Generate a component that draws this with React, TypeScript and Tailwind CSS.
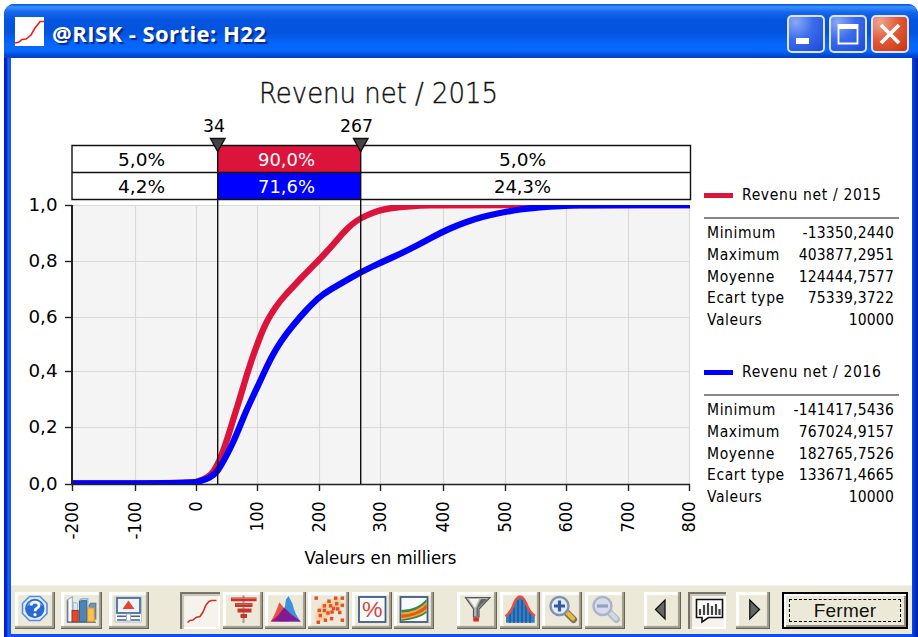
import type { ReactNode } from "react";
import clsx from "clsx";

const FONT = "font-['DejaVu_Sans_Condensed','DejaVu_Sans',sans-serif]";

const legends = [
  {
    name: "Revenu net / 2015",
    swatch: "bg-[#dc143c]",
    rows: [
      ["Minimum", "-13350,2440"],
      ["Maximum", "403877,2951"],
      ["Moyenne", "124444,7577"],
      ["Ecart type", "75339,3722"],
      ["Valeurs", "10000"],
    ],
  },
  {
    name: "Revenu net / 2016",
    swatch: "bg-[#0000ff]",
    rows: [
      ["Minimum", "-141417,5436"],
      ["Maximum", "767024,9157"],
      ["Moyenne", "182765,7526"],
      ["Ecart type", "133671,4665"],
      ["Valeurs", "10000"],
    ],
  },
];

const xTicks = [
  { x: 72, label: "-200", len: 38 },
  { x: 135, label: "-100", len: 38 },
  { x: 196, label: "0", len: 10 },
  { x: 257, label: "100", len: 30 },
  { x: 319, label: "200", len: 31 },
  { x: 380, label: "300", len: 31 },
  { x: 443, label: "400", len: 31 },
  { x: 505, label: "500", len: 31 },
  { x: 566, label: "600", len: 31 },
  { x: 628, label: "700", len: 31 },
  { x: 689, label: "800", len: 31 },
];

const yTicks = [
  { y: 205, label: "1,0" },
  { y: 261, label: "0,8" },
  { y: 317, label: "0,6" },
  { y: 371, label: "0,4" },
  { y: 427, label: "0,2" },
  { y: 484, label: "0,0" },
];

const curve2015: number[][] = [
  [72, 483.5], [190, 483.5], [203, 480], [211, 475], [217, 466], [222, 454], [228, 437], [233, 420], [240, 398],
  [247, 374], [255, 350], [264, 327], [271, 314], [280, 301], [290, 290], [305, 274], [318, 261], [332, 246],
  [342, 234], [352, 224], [361, 218], [372, 213], [384, 209], [400, 207], [420, 205.5], [440, 205], [690, 205],
];
const curve2016: number[][] = [
  [72, 483.5], [190, 483.5], [205, 480], [214, 475], [219, 469], [228, 453], [236, 436], [246, 411], [257, 388],
  [268, 364], [276, 349], [286, 334], [300, 317], [312, 304], [323, 294], [340, 284], [361, 272], [382, 262],
  [400, 254], [420, 244], [440, 233], [458, 225], [475, 219], [490, 215], [510, 211], [530, 208], [550, 206.5],
  [570, 205.5], [590, 205], [690, 205],
];

// Rounds the corners: each point becomes the control point between two midpoints
const smooth = (pts: number[][]) => {
  let d = `M${pts[0][0]} ${pts[0][1]}`;
  for (let i = 1; i < pts.length - 1; i++) {
    const [x, y] = pts[i];
    const [nx, ny] = pts[i + 1];
    d += `Q${x} ${y} ${(x + nx) / 2} ${(y + ny) / 2}`;
  }
  const last = pts[pts.length - 1];
  return `${d}L${last[0]} ${last[1]}`;
};

// The view box keeps window coordinates, so the drawing starts at 11,58
const Chart = () => (
  <svg viewBox="11 58 689 527" className={clsx("h-[527px] w-[689px] shrink-0", FONT)}>
    <defs>
      <clipPath id="plot">
        <rect x="72" y="205" width="618" height="279" />
      </clipPath>
    </defs>

    <text
      x="259"
      y="103"
      fontSize="29"
      textLength="239"
      lengthAdjust="spacingAndGlyphs"
      fill="#111"
      stroke="#111"
      strokeWidth="0.4"
      className="font-['DejaVu_Sans_Light','DejaVu_Sans',sans-serif] font-extralight"
    >
      Revenu net / 2015
    </text>

    {/* Plot area and grid */}
    <rect x="72" y="205" width="618" height="279" fill="#f4f4f4" />
    <g stroke="#dadada" strokeWidth="1.2">
      {xTicks.slice(1).map((t) => (
        <line key={t.x} x1={t.x + 0.5} x2={t.x + 0.5} y1="205" y2="484" />
      ))}
      {yTicks.slice(0, -1).map((t) => (
        <line key={t.y} x1="72" x2="690" y1={t.y + 0.5} y2={t.y + 0.5} />
      ))}
    </g>

    {/* Curves */}
    <g clipPath="url(#plot)" fill="none" strokeWidth="6.3" strokeLinejoin="round">
      <path d={smooth(curve2015)} stroke="#dc143c" />
      <path d={smooth(curve2016)} stroke="#0000ff" />
    </g>

    {/* Axes */}
    <g stroke="#222" strokeWidth="1.4">
      <line x1="72" x2="72" y1="205" y2="485" strokeWidth="2" />
      <line x1="71" x2="690" y1="484.5" y2="484.5" />
      {xTicks.map((t) => (
        <line key={t.x} x1={t.x + 0.5} x2={t.x + 0.5} y1="484" y2="491" />
      ))}
      {yTicks.map((t) => (
        <line key={t.y} x1="65" x2="72" y1={t.y + 0.5} y2={t.y + 0.5} />
      ))}
    </g>
    {yTicks.map((t) => (
      <text key={t.label} x="28.5" y={t.y + 5.5} fontSize="18.5" textLength="29" lengthAdjust="spacingAndGlyphs">
        {t.label}
      </text>
    ))}
    {xTicks.map((t) => (
      <text
        key={t.label}
        transform={`translate(${t.x + 6} 501.5) rotate(-90)`}
        fontSize="18.5"
        textAnchor="end"
        textLength={t.len}
        lengthAdjust="spacingAndGlyphs"
      >
        {t.label}
      </text>
    ))}
    <text x="304.5" y="564" fontSize="17" textLength="152" lengthAdjust="spacingAndGlyphs">
      Valeurs en milliers
    </text>

    {/* Delimiter bar */}
    <rect x="72" y="145.5" width="618" height="54" fill="#fff" />
    <rect x="217.5" y="145.5" width="143" height="27" fill="#dc143c" />
    <rect x="217.5" y="172.5" width="143" height="27" fill="#0000ff" />
    <g stroke="#111" strokeWidth="1.4">
      <path d="M72 145.5H690.5V199.5H72ZM72 172.5H690.5" fill="none" />
      <line x1="217.7" x2="217.7" y1="146" y2="484" />
      <line x1="360.7" x2="360.7" y1="146" y2="484" />
      <path d="M210.5 138.5H225L217.7 151.5Z" fill="#444" />
      <path d="M353.5 138.5H368L360.7 151.5Z" fill="#444" />
    </g>
    <g fontSize="18.5">
      <text x="203" y="132" textLength="22" lengthAdjust="spacingAndGlyphs">34</text>
      <text x="340" y="132" textLength="33" lengthAdjust="spacingAndGlyphs">267</text>
      <text x="118" y="166" textLength="47" lengthAdjust="spacingAndGlyphs">5,0%</text>
      <text x="118" y="193" textLength="47" lengthAdjust="spacingAndGlyphs">4,2%</text>
      <text x="258" y="166" textLength="57" lengthAdjust="spacingAndGlyphs" fill="#fff">90,0%</text>
      <text x="258" y="193" textLength="57" lengthAdjust="spacingAndGlyphs" fill="#fff">71,6%</text>
      <text x="499" y="166" textLength="47" lengthAdjust="spacingAndGlyphs">5,0%</text>
      <text x="494" y="193" textLength="57" lengthAdjust="spacingAndGlyphs">24,3%</text>
    </g>
  </svg>
);

const Legend = ({ name, swatch, rows }: (typeof legends)[number]) => (
  <section className="h-[177px] w-[195px] text-[15.5px] leading-[22px] text-black">
    <h2 className="flex items-center gap-[9px]">
      <span className={clsx("h-[5px] w-[29px]", swatch)} />
      <span className="tracking-[0.65px] whitespace-nowrap">{name}</span>
    </h2>
    <div className="mt-[11px] h-[1.5px] bg-[#888]" />
    <dl className="mt-[3.5px] pr-[5px] pl-[3px]">
      {rows.map(([label, value]) => (
        <div key={label} className="flex h-[21.75px] justify-between whitespace-nowrap">
          <dt className="tracking-[0.6px]">{label}</dt>
          <dd className="tracking-[0.2px]">{value}</dd>
        </div>
      ))}
    </dl>
  </section>
);

type ToolProps = { className: string; pressed?: boolean; label: string; children: ReactNode };

const Tool = ({ className, pressed, label, children }: ToolProps) => (
  <button
    type="button"
    aria-label={label}
    className={clsx(
      "h-[37px] shrink-0",
      pressed
        ? "bg-[#f5f3ec] shadow-[inset_2px_2px_0_#77756b,inset_4px_4px_1px_#c9c5b6,inset_-2px_-2px_0_#fff]"
        : "bg-[#ece9d8] shadow-[inset_-1px_-1px_0_#66645a,inset_-3px_-3px_1px_#9f9c8e,inset_3px_3px_1px_#fff]",
      className
    )}
  >
    <svg viewBox="0 0 40 37" preserveAspectRatio="xMinYMin slice" className="h-full w-full">
      {children}
    </svg>
  </button>
);

const Magnifier = ({ plus }: { plus?: boolean }) => (
  <g opacity={plus ? 1 : 0.55}>
    <path d="M24 20L31.5 27.5" stroke={plus ? "#7d7560" : "#8793c4"} strokeWidth="7" strokeLinecap="round" />
    <path d="M25.5 21L31 26.5" stroke={plus ? "#eebb35" : "#bccbf0"} strokeWidth="4" strokeLinecap="round" />
    <circle cx="17.5" cy="14" r="9" fill={plus ? "#e2edff" : "#c5d3fa"} stroke={plus ? "#8292b0" : "#7888c8"} strokeWidth="2.5" />
    <path d={plus ? "M12 14H23M17.5 8.5V19.5" : "M12 14H23"} stroke={plus ? "#355b9c" : "#5163b0"} strokeWidth="3.2" />
  </g>
);

const scatter = [
  [8, 6], [20.5, 9], [27, 6], [33.5, 6], [22, 13.5], [28, 11.5], [33.5, 13], [16, 13.5], [11, 18], [16, 18],
  [19.5, 20.5], [25, 16], [29, 16.5], [12, 23], [23.5, 19.5], [31, 20], [10, 29.5], [17, 27.5], [23, 26], [33.5, 27.5],
];

const Toolbar = () => (
  <div className="flex h-[49px] items-start border-t border-[#f5f3e9] bg-[#ece9d8] pt-[6px] pl-[4px]">
    <Tool label="Aide" className="w-[40px]">
      <path d="M14.5 4.5H25L32 11.5V21.5L25 28.5H14.5L7.5 21.5V11.5Z" fill="#e4eeff" stroke="#578be0" strokeWidth="1.6" />
      <circle cx="19.8" cy="16.5" r="9.7" fill="#2868d8" />
      <path d="M12 14A8 7 0 0 1 27.5 14Q20 10 12 14Z" fill="#6fa0f2" />
      <path d="M16 13.5Q16.5 10 20 10Q24 10.2 24 13.3Q24 15.3 21.5 16.5Q20 17.3 20 19.3" fill="none" stroke="#fff" strokeWidth="2.6" />
      <circle cx="20" cy="22.7" r="1.6" fill="#fff" />
    </Tool>
    <Tool label="Histogrammes" className="ml-[6px] w-[41px]">
      <path d="M6 8L11 4.5V29H6Z" fill="#fff" stroke="#8ba0be" />
      <path d="M6.5 8V29.5H34" fill="none" stroke="#6c7f9b" strokeWidth="1.5" />
      <path d="M12 18V10L16 11V28" fill="#dfe8f1" stroke="#a9bdd2" />
      <rect x="10.8" y="18" width="6" height="11" fill="#e34924" stroke="#a93520" />
      <rect x="18" y="8.5" width="7" height="20.5" fill="#4c86b9" stroke="#326490" />
      <path d="M18 8.5L20 6.5H26V28" fill="none" stroke="#8fb8da" strokeWidth="1.5" />
      <path d="M27 14L29 11H34V27" fill="#6897bf" stroke="#45769d" />
      <rect x="26" y="15.5" width="6.5" height="13.5" fill="#ffc44d" stroke="#dd8b23" />
    </Tool>
    <Tool label="Rapport" className="ml-[7px] w-[40px]">
      <path d="M6 5H32.5V30H6Z" fill="#f6f8fb" stroke="#b8c3d2" />
      <rect x="8" y="6" width="23" height="15" fill="#edf4fc" stroke="#45658d" strokeWidth="1.7" />
      <path d="M19.5 8.5L25.5 17H13.5Z" fill="#e4472e" />
      <path d="M8 24.3H17M22 24.3H31M8 28H17M22 28H31" stroke="#486486" strokeWidth="1.6" />
      <path d="M17.5 22H21.5V29H17.5Z" fill="#fff" stroke="#a7b4c6" />
    </Tool>

    <Tool label="Cumulative" pressed className="ml-[31px] w-[40px]">
      <path d="M7.5 30.5L10 28.5L13 28L16 25.5L20 24.5L23 20L26 13L29 9.5L31.5 8.5H36.5" fill="none" stroke="#ce332d" strokeWidth="1.6" />
    </Tool>
    <Tool label="Tornade" className="ml-[3px] w-[40px]">
      <path d="M20.5 3.5V31" stroke="#9c9c9c" strokeWidth="2" />
      <path d="M8 7.3H33.5M12 13H29.5M14.5 18.5H28.5M17.5 24H24" stroke="#c7352a" strokeWidth="3.8" />
      <path d="M8.5 6.5H33M12.5 12.2H29" stroke="#e56a59" />
    </Tool>
    <Tool label="Superposition" className="ml-[2px] w-[41px]">
      <path d="M5.5 28.7Q10 22 14 10L19 16L23 28.7Z" fill="#e85243" />
      <path d="M14 28.7Q19 20 20.5 7L23 4L27 12Q29 22 35 28.7Z" fill="#3e91df" />
      <path d="M5.5 28.7Q12 25 18.5 15Q25 22 35 28.7Z" fill="#841991" />
    </Tool>
    <Tool label="Nuage" className="ml-[2px] w-[41px]">
      <path d="M7 27Q6 17 17 9L29 5Q35 7 31 16Q23 23 12 29Z" fill="#ffd2a3" />
      {scatter.map(([x, y]) => (
        <rect key={`${x}-${y}`} x={x - 1.7} y={y - 1.7} width="3.4" height="3.4" fill="#d9542e" />
      ))}
    </Tool>
    <Tool label="Pourcentage" className="ml-[3px] w-[40px]">
      <rect x="7" y="5" width="26.5" height="25" fill="#f8fbff" stroke="#415d84" strokeWidth="1.8" />
      <text x="10" y="25" fontSize="22" textLength="20.5" lengthAdjust="spacingAndGlyphs" fill="#d94335" className="font-['Liberation_Sans',sans-serif] font-normal">
        %
      </text>
    </Tool>
    <Tool label="Tendance" className="ml-[2px] w-[40px]">
      <rect x="6.5" y="5" width="27" height="25" fill="#f8fbff" stroke="#415d84" strokeWidth="1.8" />
      <path d="M7.4 18Q23 18 32.6 7V21Q25 27 7.4 29.1Z" fill="#438445" />
      <path d="M7.4 20.5Q24 20 32.6 10V19Q25 25 7.4 27.5Z" fill="#f4aa37" />
      <path d="M7.4 22.5Q24 22 32.6 12V17Q24 24 7.4 26Z" fill="#db5d24" />
    </Tool>

    <Tool label="Filtre" className="ml-[23px] w-[40px]">
      <path d="M8.5 5.5H33L22 17V25H16.5V17Z" fill="#b7b7b7" stroke="#555" strokeWidth="1.2" />
      <path d="M12 7H22L18 16Z" fill="#f3f3f3" />
      <path d="M24 7H30L21 16V24H19.5V16Z" fill="#666" />
      <rect x="16.3" y="25.3" width="5.6" height="4.2" fill="#dd2d22" />
    </Tool>
    <Tool label="Ajustement" className="ml-[3px] w-[40px]">
      <path d="M6 30.7V25Q12 19 15 9Q18 5 20 5Q23 5 26 11Q29 20 34.7 24V30.7Z" fill="#327fc5" />
      <path d="M10 22V31M14 15V31M18 8V31M22 8V31M26 13V31M30 20V31" stroke="#154e8c" strokeWidth="1.2" />
      <path d="M5.5 24.5Q12 19 15 9Q18 4.5 20 4.5Q23 4.5 26 11Q29 20 35 24" fill="none" stroke="#ee4c38" strokeWidth="2.5" />
    </Tool>
    <Tool label="Zoom avant" className="ml-[2px] w-[40px]">
      <Magnifier plus />
    </Tool>
    <Tool label="Zoom arrière" className="ml-[3px] w-[40px]">
      <Magnifier />
    </Tool>

    <Tool label="Précédent" className="ml-[19px] w-[37px]">
      <path d="M11.5 17.5L21 8V27Z" fill="#666" stroke="#111" strokeWidth="1.3" />
    </Tool>
    <Tool label="Graphique" pressed className="ml-[7px] w-[38px]">
      <path d="M8.5 7.5H34.5V25.5H20.5L14 30V25.5H8.5Z" fill="#fff" stroke="#111" strokeWidth="1.6" />
      <path d="M12 17V23M16 13V23M20 11V23M24 14V23M28 12V23M31.5 17V23" stroke="#444" strokeWidth="2.2" />
    </Tool>
    <Tool label="Suivant" className="ml-[10px] w-[34px]">
      <path d="M23.5 17.5L13.8 8V27Z" fill="#666" stroke="#111" strokeWidth="1.3" />
    </Tool>

    <button
      type="button"
      className="ml-[12px] h-[37px] w-[126px] shrink-0 border-2 border-black bg-[#ece9d8] p-[5px] shadow-[inset_2px_2px_0_#fff,inset_-2px_-2px_0_#8f8c80]"
    >
      <span className="flex h-full items-center justify-center border border-dashed border-black font-['Liberation_Sans',sans-serif] text-[19px] leading-none tracking-[0.2px] text-[#111]">
        Fermer
      </span>
    </button>
  </div>
);

const captionButton =
  "flex h-[38px] w-[38px] items-center justify-center rounded-[5px] border-2 border-[#d9e6fc]";

const App = () => (
  <div className="h-[637px] w-[918px] overflow-hidden bg-white pt-[4px] pl-[4px]">
    <div className="h-[640px] w-[914px] rounded-t-[10px] bg-[linear-gradient(to_right,#0015c8_0,#0030d8_3px,#1c68f0_4px,#1050e8_7px,#1050e8_907px,#0038dc_910px,#001b9c_914px)]">
      {/* Title bar */}
      <header className="flex h-[54px] items-center rounded-t-[10px] bg-[linear-gradient(to_bottom,#0650d8_0,#3a91ff_3px,#1668ec_8px,#0454df_16px,#0353dd_28px,#0766fc_40px,#0668fb_47px,#004bd8_51px,#0140c5_54px)] pr-[9px] pl-[11px]">
        <svg viewBox="0 0 29 29" className="h-[29px] w-[29px] bg-white">
          <path d="M0 26L4 25L7 22.5L11 22L16 18L20 11L24 6L25 4.5H29" fill="none" stroke="#ed1c1c" strokeWidth="1.6" />
        </svg>
        <h1 className="ml-[8px] pt-[4px] font-['Open_Sans',sans-serif] text-[22px] leading-none font-bold tracking-[0.45px] whitespace-nowrap text-white [text-shadow:2px_2px_1px_#0a2a8c]">
          @RISK - Sortie: H22
        </h1>
        <div className="ml-auto flex gap-[4px] pt-[5px]">
          <button type="button" aria-label="Réduire" className={clsx(captionButton, "bg-[radial-gradient(circle_at_20%_15%,#89a9f5,#3b6bed_45%,#1c49d8)]")}>
            <svg viewBox="0 0 34 34" className="h-full w-full">
              <rect x="7" y="21" width="13" height="6" fill="#fff" />
            </svg>
          </button>
          <button type="button" aria-label="Agrandir" className={clsx(captionButton, "bg-[radial-gradient(circle_at_20%_15%,#89a9f5,#3b6bed_45%,#1c49d8)]")}>
            <svg viewBox="0 0 34 34" className="h-full w-full">
              <path d="M7.5 8H26.5V26.5H7.5Z" fill="none" stroke="#fff" strokeWidth="1.8" />
              <rect x="7" y="7" width="20" height="5" fill="#fff" />
            </svg>
          </button>
          <button type="button" aria-label="Fermer" className={clsx(captionButton, "bg-[radial-gradient(circle_at_20%_15%,#f0a48e,#e35b39_45%,#c9330f)]")}>
            <svg viewBox="0 0 34 34" className="h-full w-full">
              <path d="M8 8L26 26M26 8L8 26" stroke="#fff" strokeWidth="3.8" />
            </svg>
          </button>
        </div>
      </header>

      <main className="ml-[7px] w-[901px] bg-white">
        <div className="flex h-[527px]">
          <Chart />
          <aside className={clsx("ml-[4px] pt-[126px]", FONT)}>
            {legends.map((legend) => (
              <Legend key={legend.name} {...legend} />
            ))}
          </aside>
        </div>
        <Toolbar />
      </main>
    </div>
  </div>
);

export default App;
